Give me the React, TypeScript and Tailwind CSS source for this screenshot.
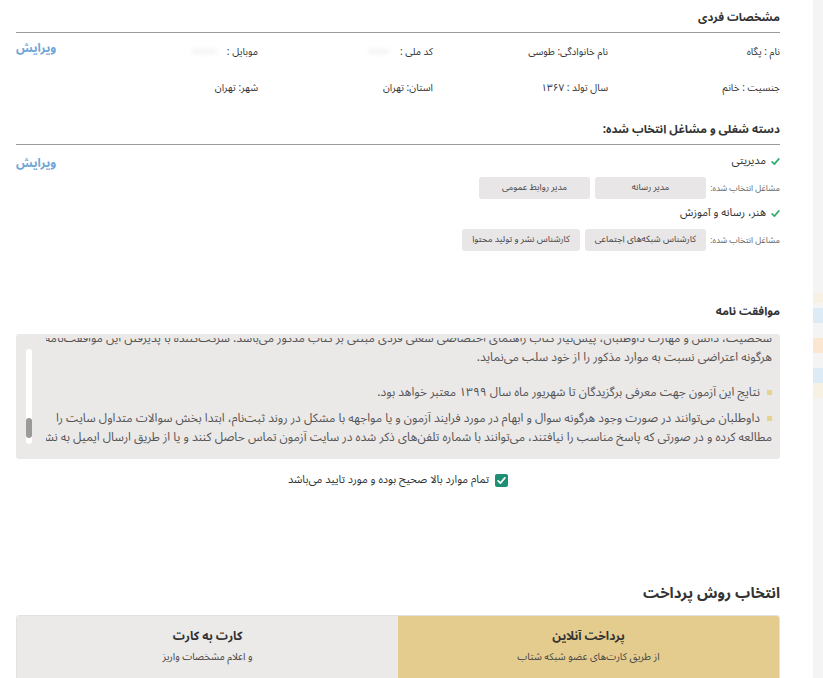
import React from 'react'

// Profile review page: personal info, selected jobs, agreement and payment method

const FONT = { fontFamily: '"Noto Sans Arabic", "DejaVu Sans", sans-serif' }

function Check({ className = '' }: { className?: string }) {
  return (
    <svg viewBox="0 0 12 12" className={className} fill="none">
      <path d="M1.5 6.5 4.5 9.5 10.5 2.5" stroke="currentColor" strokeWidth="2.2" strokeLinecap="round" strokeLinejoin="round" />
    </svg>
  )
}

function SectionTitle({ children, line = true }: { children: React.ReactNode; line?: boolean }) {
  return (
    <div>
      <h2 className="text-[11.5px] font-bold text-[#333] leading-[18px]">{children}</h2>
      {line && <div className="h-px bg-[#9b9b9b] mt-[6px]" />}
    </div>
  )
}

function Blur({ w }: { w: number }) {
  return <span className="inline-block h-[5px] rounded-full bg-[#f4f4f4] blur-[2px] mr-[10px]" style={{ width: w }} />
}

function Chip({ children }: { children: React.ReactNode }) {
  return (
    <span className="min-w-[111px] h-[22px] px-[10px] flex items-center justify-center rounded-[3px] bg-[#e8e6e6] text-[9px] text-[#444] whitespace-nowrap">
      {children}
    </span>
  )
}

function JobGroup({ title, jobs }: { title: string; jobs: string[] }) {
  return (
    <div>
      <div className="flex items-center gap-[5px] h-[18px] text-[11px] text-[#333]">
        <Check className="w-[9px] h-[9px] text-[#2fae6c]" />
        <span>{title}</span>
      </div>
      <div className="flex items-center gap-[5px] mt-[7px]">
        <span className="text-[8.5px] text-[#666] w-[69px] whitespace-nowrap">مشاغل انتخاب شده:</span>
        {jobs.map(j => <Chip key={j}>{j}</Chip>)}
      </div>
    </div>
  )
}

function Bullet() {
  return <span className="inline-block w-[5px] h-[5px] ml-[7px] bg-[#e6d38c] align-middle" />
}

export default function App() {
  return (
    <div dir="rtl" style={FONT} className="w-[823px] h-[678px] overflow-hidden flex bg-white text-[#333]">
      {/* right side strip */}
      <div className="w-[10px] shrink-0 bg-[#f4f4f4] flex flex-col pt-[293px]">
        <div className="h-[10px] bg-[#f7f1e3]" />
        <div className="h-[15px] mt-[5px] bg-[#dcebf6]" />
        <div className="h-[15px] mt-[15px] bg-[#fbe6d2]" />
        <div className="h-[15px] mt-[15px] bg-[#dcebf6]" />
        <div className="h-[15px] bg-[#f7f1e3]" />
      </div>

      <div className="flex-1 min-w-0 pr-[33px] pl-[16px] pt-[8px]">
        {/* personal info */}
        <SectionTitle>مشخصات فردی</SectionTitle>
        <div className="flex items-center h-[20px] mt-[8px] text-[10px]">
          <span className="w-[172px]">نام : پگاه</span>
          <span className="w-[175px]">نام خانوادگی: طوسی</span>
          <span className="w-[175px] flex items-center">کد ملی : <Blur w={22} /></span>
          <span className="flex items-center">موبایل : <Blur w={26} /></span>
          <a className="mr-auto text-[12px] font-bold text-[#6ea6d8] -mt-[4px]">ویرایش</a>
        </div>
        <div className="flex items-center h-[20px] mt-[16px] text-[10px]">
          <span className="w-[172px]">جنسیت : خانم</span>
          <span className="w-[175px]">سال تولد : ۱۳۶۷</span>
          <span className="w-[175px]">استان: تهران</span>
          <span>شهر: تهران</span>
        </div>

        {/* job categories */}
        <div className="mt-[23px]">
          <SectionTitle>دسته شغلی و مشاغل انتخاب شده:</SectionTitle>
        </div>
        <div className="flex items-start mt-[7px]">
          <div className="flex flex-col gap-[5px]">
            <JobGroup title="مدیریتی" jobs={['مدیر رسانه', 'مدیر روابط عمومی']} />
            <JobGroup title="هنر، رسانه و آموزش" jobs={['کارشناس شبکه‌های اجتماعی', 'کارشناس نشر و تولید محتوا']} />
          </div>
          <a className="mr-auto mt-[3px] text-[12px] font-bold text-[#6ea6d8]">ویرایش</a>
        </div>

        {/* agreement */}
        <div className="mt-[51px]">
          <SectionTitle line={false}>موافقت نامه</SectionTitle>
        </div>
        <div className="relative mt-[14px] h-[125px] rounded-[3px] bg-[#ebe8e8] overflow-hidden">
          <div className="h-[110px] mt-[4px] overflow-hidden mr-[8px] ml-[30px]">
            <div className="-mt-[9px] text-[12px] leading-[19px] text-[#555] whitespace-nowrap">
              <p>
                شخصیت، دانش و مهارت داوطلبان، پیش‌نیاز کتاب راهنمای اختصاصی شغلی فردی مبتنی بر کتاب مذکور می‌باشد. شرکت‌کننده با پذیرفتن این موافقت‌نامه حق
                <br />
                هرگونه اعتراضی نسبت به موارد مذکور را از خود سلب می‌نماید.
              </p>
              <p className="mt-[16px]">
                <Bullet />
                نتایج این آزمون جهت معرفی برگزیدگان تا شهریور ماه سال ۱۳۹۹ معتبر خواهد بود.
              </p>
              <p className="mt-[7px]">
                <Bullet />
                داوطلبان می‌توانند در صورت وجود هرگونه سوال و ابهام در مورد فرایند آزمون و یا مواجهه با مشکل در روند ثبت‌نام، ابتدا بخش سوالات متداول سایت را
                <br />
                مطالعه کرده و در صورتی که پاسخ مناسب را نیافتند، می‌توانند با شماره تلفن‌های ذکر شده در سایت آزمون تماس حاصل کنند و یا از طریق ارسال ایمیل به نشانی
              </p>
            </div>
          </div>
          {/* scrollbar */}
          <div className="absolute left-[10px] top-[15px] w-[6px] h-[95px] rounded-full bg-white">
            <div className="absolute bottom-[6px] left-0 w-[6px] h-[20px] rounded-full bg-[#9a9a9a]" />
          </div>
        </div>

        <label className="flex items-center justify-center gap-[6px] mt-[13px] h-[16px] text-[11px] text-[#333]">
          <span className="w-[13px] h-[13px] rounded-[2px] bg-[#1f8f73] flex items-center justify-center">
            <Check className="w-[9px] h-[9px] text-white" />
          </span>
          <span>تمام موارد بالا صحیح بوده و مورد تایید می‌باشد</span>
        </label>

        {/* payment */}
        <div className="mt-[96px]">
          <h2 className="text-[15px] font-bold text-[#333] leading-[18px]">انتخاب روش پرداخت</h2>
        </div>
        <div className="mt-[13px] flex h-[70px] rounded-t-[3px] border border-[#e2e2e2] overflow-hidden">
          <div className="flex-1 bg-[#e4cc8f] flex flex-col items-center pt-[12px]">
            <span className="text-[12px] font-bold text-[#333]">پرداخت آنلاین</span>
            <span className="text-[10px] text-[#444] mt-[3px]">از طریق کارت‌های عضو شبکه شتاب</span>
          </div>
          <div className="flex-1 bg-[#ece9e9] flex flex-col items-center pt-[12px]">
            <span className="text-[12px] font-bold text-[#333]">کارت به کارت</span>
            <span className="text-[10px] text-[#444] mt-[3px]">و اعلام مشخصات واریز</span>
          </div>
        </div>
      </div>
    </div>
  )
}
